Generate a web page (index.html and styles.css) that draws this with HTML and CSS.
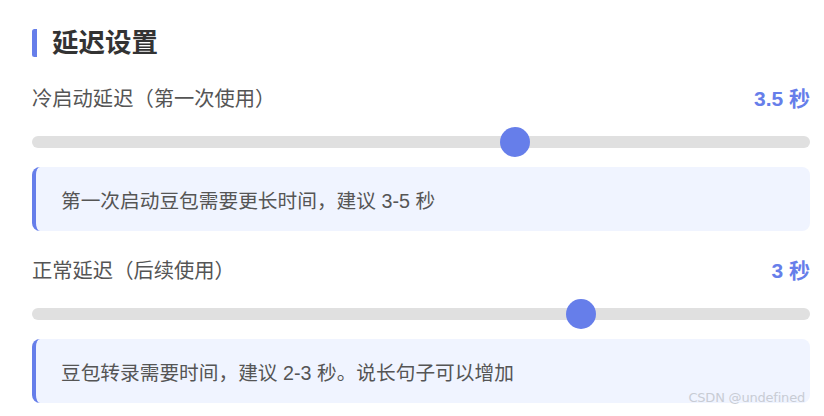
FILE: index.html
```html
<!DOCTYPE html>
<html lang="zh">
<head>
<meta charset="utf-8">
<link rel="stylesheet" href="styles.css">
</head>
<body>
<div class="panel">
  <h2 class="section-title">延迟设置</h2>

  <div class="setting">
    <div class="row">
      <span class="label">冷启动延迟（第一次使用）</span>
      <span class="value">3.5 秒</span>
    </div>
    <input class="slider" type="range" min="1" max="5" step="0.5" value="3.5">
    <div class="hint">第一次启动豆包需要更长时间，建议 3-5 秒</div>
  </div>

  <div class="setting">
    <div class="row">
      <span class="label">正常延迟（后续使用）</span>
      <span class="value">3 秒</span>
    </div>
    <input class="slider" type="range" min="0.5" max="4" step="0.5" value="3">
    <div class="hint">豆包转录需要时间，建议 2-3 秒。说长句子可以增加</div>
  </div>
</div>
<div class="watermark">CSDN @undefined</div>
</body>
</html>
```

FILE: styles.css
```css
* { box-sizing: border-box; }
html, body { margin: 0; padding: 0; background: #fff; }
body {
  width: 824px;
  height: 416px;
  overflow: hidden;
  position: relative;
  font-family: "Liberation Sans", "Noto Sans CJK SC", sans-serif;
  color: #555;
}
.panel {
  width: 778px;
  margin-left: 32px;
  padding-top: 29px;
}
.section-title {
  margin: 0;
  height: 28px;
  line-height: 28px;
  border-left: 5px solid #667eea;
  border-radius: 2.5px;
  padding-left: 15px;
  font-size: 26.5px;
  font-weight: 700;
  color: #333;
}
.setting { margin-top: 28px; }
.setting + .setting { margin-top: 26px; }
.row {
  display: flex;
  justify-content: space-between;
  align-items: center;
  height: 28px;
  line-height: 28px;
}
.label { font-size: 20.3px; color: #555; }
.value { font-size: 21px; font-weight: 700; color: #667eea; }
.slider {
  -webkit-appearance: none;
  appearance: none;
  display: block;
  width: 100%;
  height: 30px;
  margin: 14px 0 0;
  padding: 0;
  background: transparent;
  outline: none;
}
.slider::-webkit-slider-runnable-track {
  height: 12px;
  background: #e0e0e0;
  border-radius: 6px;
}
.slider::-webkit-slider-thumb {
  -webkit-appearance: none;
  appearance: none;
  width: 30px;
  height: 30px;
  margin-top: -9px;
  border-radius: 50%;
  background: #667eea;
  border: none;
}
.hint {
  margin-top: 10px;
  height: 64px;
  display: flex;
  align-items: center;
  padding-left: 25px;
  background: #f0f4ff;
  border-left: 4px solid #667eea;
  border-radius: 8px;
  font-size: 19.7px;
  color: #555;
}
.watermark {
  position: absolute;
  right: 19px;
  top: 390px;
  font-family: "DejaVu Sans", sans-serif;
  font-size: 13px;
  letter-spacing: -0.2px;
  color: #c8ccd4;
}
```
